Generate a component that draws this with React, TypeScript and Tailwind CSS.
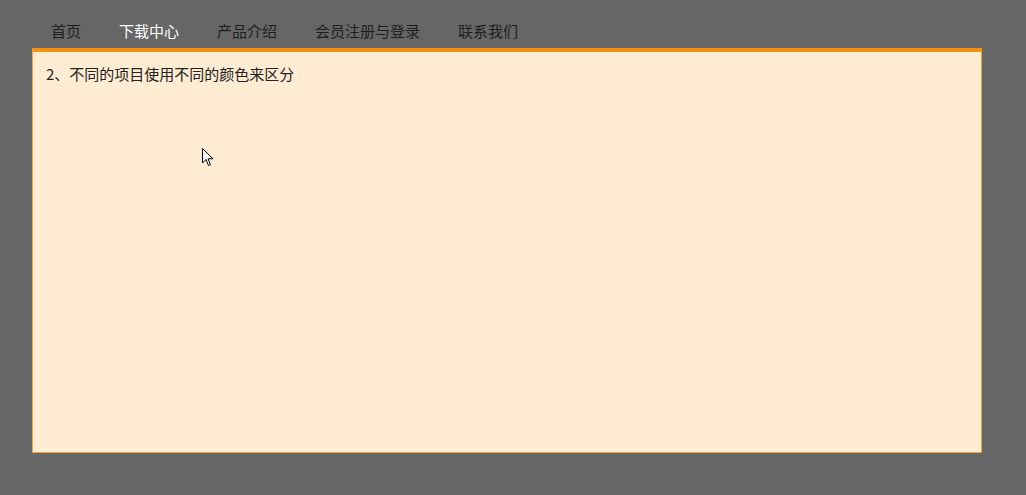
export default function App() {
  const items = ['首页', '下载中心', '产品介绍', '会员注册与登录', '联系我们']

  return (
    <div
      className="relative h-[495px] w-[1026px] bg-[#666666] pl-[32px] pt-[14px]"
      style={{ fontFamily: '"Noto Sans CJK SC", "Liberation Sans", sans-serif' }}
    >
      <nav className="flex h-[34px] items-center">
        {items.map((item, i) => (
          <a
            key={item}
            className={
              'px-[19px] text-[15px] leading-[34px] ' +
              (i === 1 ? 'text-white' : 'text-[#1e1e1e]')
            }
          >
            {item}
          </a>
        ))}
      </nav>
      <div className="h-[405px] w-[950px] border border-t-4 border-[#f5a33a] border-t-[#f29410] bg-[#ffecd2] px-[13px] pt-[11px]">
        <p className="text-[15px] leading-[22px] text-[#222]">2、不同的项目使用不同的颜色来区分</p>
      </div>

      {/* mouse pointer captured in the screenshot */}
      <svg className="absolute left-[202px] top-[148px]" width="13" height="19" viewBox="0 0 13 19">
        <path d="M0.5 0.5 L0.5 15 L4 11.5 L6.5 17.5 L8.5 16.7 L6 10.8 L11 10.8 Z" fill="#fff" stroke="#000" strokeWidth="1" strokeLinejoin="round" />
      </svg>
    </div>
  )
}
